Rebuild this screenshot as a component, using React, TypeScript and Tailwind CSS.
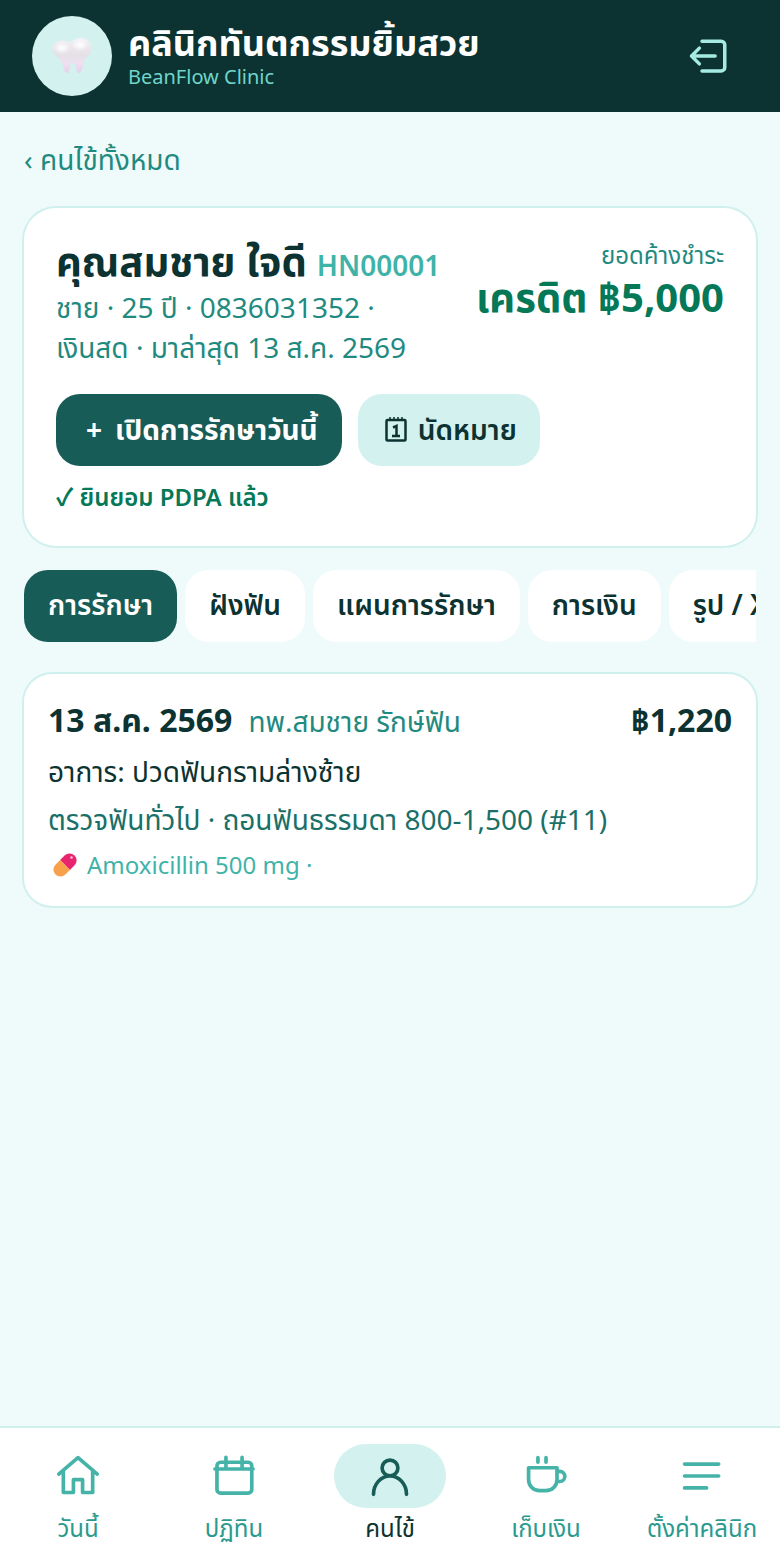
import React from 'react';

const FONT = "font-['Noto_Sans','Noto_Sans_Thai','Noto_Sans_CJK_SC',sans-serif]";

const tabs = ['การรักษา', 'ฝังฟัน', 'แผนการรักษา', 'การเงิน', 'รูป / X-ray'];

const navItems = [
  { label: 'วันนี้', d: 'M1.500 11L12 2l10.500 9M4 9v12h5.500v-7h5v7H20V9' },
  { label: 'ปฏิทิน', d: 'M4.700 4.500h15a2 2 0 012 2v12.800a2 2 0 01-2 2h-15a2 2 0 01-2-2V6.500a2 2 0 012-2zM1.600 8.200h20.800M7.600 1.800v6.400M16.400 1.800v6.400' },
  { label: 'คนไข้', d: 'M12 3.300a4.300 4.300 0 100 8.600 4.300 4.300 0 000-8.600zM3 22c0-5.500 4-10 9-10s9 4.500 9 10', active: true },
  { label: 'เก็บเงิน', d: 'M2.500 7.500H18V14a6 6 0 01-6 6H8.500a6 6 0 01-6-6zM18 9.500h1.500a2.500 2.500 0 010 5.500H18M7.600 2v2.500M12 2v2.500' },
  { label: 'ตั้งค่าคลินิก', d: 'M2.500 5.500h18.600M2.500 12h18.600M2.500 18.500h12' },
];

const Tooth = () => (
  <svg width="44" height="44" viewBox="0 0 44 44">
    <defs>
      <linearGradient id="toothFill" x1="0.5" y1="0" x2="0.5" y2="1">
        <stop offset="0" stopColor="#f4f2f5" />
        <stop offset="0.5" stopColor="#e4e0e6" />
        <stop offset="0.72" stopColor="#f0e0f2" />
        <stop offset="1" stopColor="#e6cfea" />
      </linearGradient>
      <radialGradient id="toothShine" cx="0.5" cy="0.5" r="0.5">
        <stop offset="0" stopColor="#ffffff" />
        <stop offset="1" stopColor="#ffffff" stopOpacity="0" />
      </radialGradient>
    </defs>
    <path
      d="M9 7c4-1.500 8 .5 11 1.500C24 5 30 2.500 36 5c6 3 6.500 10 4.500 14c-2 3.500-5.500 5-6.500 8c-1 4-1.500 11-5 12c-3 .5-2.500-9-6.500-11c-4 1.500-2 11-5.500 11c-3.500-1-4-8-5.500-12c-1.500-3-6-4-8-8C1 13.500 3 9 9 7z"
      fill="url(#toothFill)"
    />
    <ellipse cx="12" cy="14" rx="8" ry="6" fill="url(#toothShine)" />
    <ellipse cx="30" cy="11" rx="8" ry="6" fill="url(#toothShine)" />
  </svg>
);

const Pill = () => (
  <svg width="26" height="26" viewBox="0 0 26 26">
    <g transform="rotate(45 13 13)">
      <path d="M6 13V6.500a7 7 0 0114 0V13z" fill="#e8246f" />
      <path d="M6 13v6.500a7 7 0 0014 0V13z" fill="#f9a04d" />
    </g>
    <circle cx="19.500" cy="5.500" r="1.300" fill="#ffc4da" />
  </svg>
);

export default function App() {
  return (
    <div className={`${FONT} flex h-[1560px] w-[780px] flex-col bg-[#effbfb]`}>
      {/* Header */}
      <div className="flex h-28 items-center justify-between bg-[#0c3331] pl-8 pr-[50px]">
        <div className="flex items-center gap-4">
          <div className="flex h-20 w-20 items-center justify-center rounded-full bg-[#d3f1ef]">
            <Tooth />
          </div>
          <div>
            <div className="mb-0.5 text-4xl font-bold leading-10 text-white">คลินิกทันตกรรมยิ้มสวย</div>
            <div className="text-xl leading-6 text-[#6fd6cb]">BeanFlow Clinic</div>
          </div>
        </div>
        <svg width="42" height="42" viewBox="0 0 24 24" fill="none" stroke="#a5ebe3" strokeWidth="2" strokeLinecap="round" strokeLinejoin="round">
          <path d="M8 3.500h11a2 2 0 012 2v13a2 2 0 01-2 2H8M15.500 12H2M6.500 7.500L2 12l4.500 4.500" />
        </svg>
      </div>

      <div className="flex flex-1 flex-col px-6 pt-7">
        <div className="text-[28px] leading-[38px] text-[#1f8a80]">‹ คนไข้ทั้งหมด</div>

        {/* Patient card */}
        <div className="mt-[30px] h-[338px] rounded-[32px] bg-white px-8 pt-[26px] ring-2 ring-[#d0f0ee]">
          <div className="flex justify-between">
            <div>
              <div className="flex items-baseline gap-2.5">
                <span className="text-[40px] font-bold leading-[53px] text-[#0c3331]">คุณสมชาย ใจดี</span>
                <span className="text-[28px] font-semibold text-[#3fb3a8]">HN00001</span>
              </div>
              <div className="text-[28px] leading-10 text-[#1f8a80]">ชาย · 25 ปี · 0836031352 ·</div>
              <div className="text-[28px] leading-10 text-[#1f8a80]">เงินสด · มาล่าสุด 13 ส.ค. 2569</div>
            </div>
            <div className="pt-[5px] text-right">
              <div className="text-2xl leading-8 text-[#1f8a80]">ยอดค้างชำระ</div>
              <div className="text-[40px] font-bold leading-[52px] text-[#047857]">เครดิต ฿5,000</div>
            </div>
          </div>
          <div className="mt-[27px] flex gap-4">
            <div className="flex h-[72px] items-center gap-[13px] rounded-3xl bg-[#175c56] pb-[3px] pl-[30px] pr-6 text-[28px] font-bold text-white">
              <span>+</span>
              <span>เปิดการรักษาวันนี้</span>
            </div>
            <div className="flex h-[72px] items-center gap-[11px] rounded-3xl bg-[#d3f1ef] pb-[3px] pl-[27px] pr-[23px] text-[28px] font-semibold text-[#0c3331]">
              <svg width="22" height="26" viewBox="0 0 22 26" fill="none" stroke="#0c3331" strokeWidth="2.500">
                <rect x="1.500" y="4" width="19" height="20.500" rx="1" />
                <path d="M5 1v4M9 1v4M13 1v4M17 1v4" strokeWidth="1.500" />
                <path d="M8 11.500l3.500-1.500v10M7 20h8" />
              </svg>
              <span>นัดหมาย</span>
            </div>
          </div>
          <div className="mt-[15px] text-2xl font-semibold leading-8 text-[#047857]">✓ ยินยอม PDPA แล้ว</div>
        </div>

        {/* Tabs */}
        <div className="mt-6 flex gap-2 overflow-hidden">
          {tabs.map((t, i) => (
            <div
              key={t}
              className={`flex h-[72px] shrink-0 items-center rounded-3xl px-6 pb-1 text-[28px] font-semibold ${i === 0 ? 'bg-[#175c56] text-white' : 'bg-white text-[#0c3331]'}`}
            >
              {t}
            </div>
          ))}
        </div>

        {/* Treatment card */}
        <div className="mt-8 h-[232px] rounded-[28px] bg-white px-6 pt-4 ring-2 ring-[#d0f0ee]">
          <div className="flex h-[60px] items-center justify-between">
            <div className="flex items-baseline gap-4">
              <span className="text-[32px] font-bold text-[#0c3331]">13 ส.ค. 2569</span>
              <span className="text-[28px] text-[#1f8a80]">ทพ.สมชาย รักษ์ฟัน</span>
            </div>
            <span className="text-[32px] font-bold text-[#0c3331]">฿1,220</span>
          </div>
          <div className="text-[28px] leading-[42px] text-[#0c3331]">อาการ: ปวดฟันกรามล่างซ้าย</div>
          <div className="mt-0.5 text-[28px] leading-[50px] text-[#1a7068]">ตรวจฟันทั่วไป · ถอนฟันธรรมดา 800-1,500 (#11)</div>
          <div className="flex items-center gap-[9px] pl-1 text-2xl leading-[42px] text-[#3fb3a8]">
            <Pill />
            <span>Amoxicillin 500 mg ·</span>
          </div>
        </div>
      </div>

      {/* Bottom nav */}
      <div className="grid h-[134px] grid-cols-5 border-t-2 border-[#d0f0ee] bg-white pt-4">
        {navItems.map((n) => (
          <div key={n.label} className="flex flex-col items-center">
            <div className={`flex h-16 w-28 items-center justify-center rounded-[32px] ${n.active ? 'bg-[#d3f1ef]' : ''}`}>
              <svg width="44" height="44" viewBox="0 0 24 24" fill="none" stroke={n.active ? '#175c56' : '#45b3a8'} strokeWidth="2" strokeLinecap="round" strokeLinejoin="round">
                <path d={n.d} />
              </svg>
            </div>
            <div className={`text-2xl leading-10 ${n.active ? 'text-[#0c3331]' : 'text-[#2a9a8f]'}`}>{n.label}</div>
          </div>
        ))}
      </div>
    </div>
  );
}
